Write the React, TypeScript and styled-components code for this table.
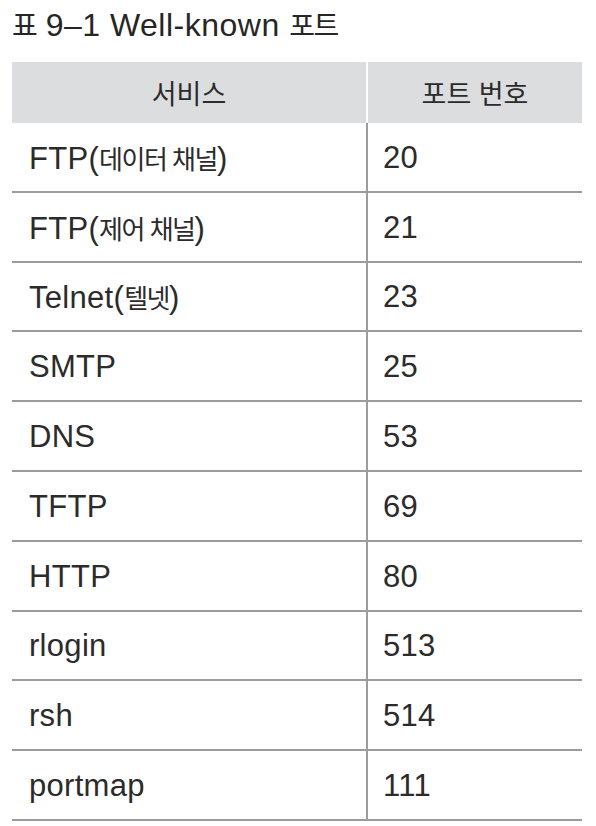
import React from 'react';
import styled, { createGlobalStyle } from 'styled-components';

const GlobalStyle = createGlobalStyle`
  body {
    margin: 0;
    background: #fff;
    font-family: "Liberation Sans", "Noto Sans CJK KR", sans-serif;
    color: #2b2b2b;
  }
`;

const Page = styled.div`
  width: 596px;
  padding: 7px 14px 0 12px;
  box-sizing: border-box;
`;

const Caption = styled.div`
  font-size: 32px;
  line-height: 36px;
  color: #262626;
  margin-bottom: 17px;
  letter-spacing: 0.5px;
`;

const Hangul = styled.span<{ $size: number }>`
  font-size: ${(p) => p.$size}px;
  letter-spacing: -1.5px;
`;

const Table = styled.table`
  width: 570px;
  border-collapse: collapse;
  table-layout: fixed;
`;

const HeadCell = styled.th`
  height: 61px;
  padding: 0;
  background: #dcdddf;
  font-weight: normal;
  font-size: 27px;
  color: #2b2b2b;
  text-align: center;
  & + & {
    border-left: 2px solid #fff;
  }
`;

const Row = styled.tr`
  border-bottom: 2px solid #9c9c9c;
`;

const Cell = styled.td<{ $num?: boolean }>`
  height: 65.8px;
  padding: 2px 0 0 ${(p) => (p.$num ? '15px' : '17px')};
  font-size: 31px;
  letter-spacing: 0.3px;
  color: #2b2b2b;
  ${(p) => p.$num && 'border-left: 2px solid #9c9c9c;'}
`;

const PORTS: [string, string][] = [
  ['FTP(데이터 채널)', '20'],
  ['FTP(제어 채널)', '21'],
  ['Telnet(텔넷)', '23'],
  ['SMTP', '25'],
  ['DNS', '53'],
  ['TFTP', '69'],
  ['HTTP', '80'],
  ['rlogin', '513'],
  ['rsh', '514'],
  ['portmap', '111'],
];

// korean runs are set in a narrower size so they sit like the condensed face in print
const withHangul = (text: string, size: number) =>
  text.split(/([가-힣][가-힣 ]*[가-힣]|[가-힣])/).map((part, i) =>
    /[가-힣]/.test(part) ? <Hangul key={i} $size={size}>{part}</Hangul> : part
  );

const App = () => (
  <Page>
    <GlobalStyle />
    <Caption>{withHangul('표 9–1 Well-known 포트', 28)}</Caption>
    <Table>
      <colgroup>
        <col style={{ width: 355 }} />
        <col style={{ width: 215 }} />
      </colgroup>
      <thead>
        <tr>
          <HeadCell>서비스</HeadCell>
          <HeadCell>포트 번호</HeadCell>
        </tr>
      </thead>
      <tbody>
        {PORTS.map(([name, port]) => (
          <Row key={name}>
            <Cell>{withHangul(name, 26)}</Cell>
            <Cell $num>{port}</Cell>
          </Row>
        ))}
      </tbody>
    </Table>
  </Page>
);

export default App;
